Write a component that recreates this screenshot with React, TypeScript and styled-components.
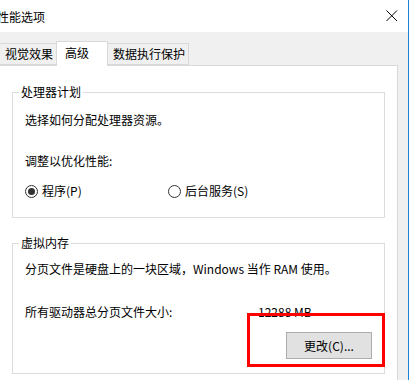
import React from "react";
import styled, { createGlobalStyle } from "styled-components";

const Global = createGlobalStyle`
  html, body { margin: 0; padding: 0; background: #fff; }
  body { font-family: "Noto Sans CJK SC", "Noto Sans", sans-serif; font-size: 12px; color: #000; }
  * { box-sizing: border-box; }
`;

const Page = styled.div`
  width: 413px;
  height: 380px;
  overflow: hidden;
  display: flex;
  background: #fff;
`;

const Window = styled.div`
  width: 409px;
  height: 380px;
  border-right: 1px solid #1883d7;
  display: flex;
  flex-direction: column;
`;

const TitleBar = styled.div`
  height: 32px;
  flex: none;
  background: #fff;
  display: flex;
  align-items: center;
  justify-content: space-between;
  padding: 0 10px 0 0;
`;

const Title = styled.span`
  margin-left: -3px;
  font-size: 12px;
  line-height: 16px;
  margin-top: 2px;
`;

const Body = styled.div`
  flex: 1;
  background: #f0f0f0;
  padding: 9px 10px 0 0;
  display: flex;
  flex-direction: column;
`;

const TabStrip = styled.div`
  display: flex;
  align-items: flex-end;
  margin-left: -2px;
  height: 24px;
  position: relative;
  z-index: 1;
`;

const Tab = styled.div<{ $active?: boolean; $w: number }>`
  width: ${(p) => p.$w}px;
  height: ${(p) => (p.$active ? 25 : 22)}px;
  margin-bottom: ${(p) => (p.$active ? -1 : 0)}px;
  background: ${(p) => (p.$active ? "#fff" : "#f0f0f0")};
  border: 1px solid #d9d9d9;
  border-bottom: ${(p) => (p.$active ? "none" : "1px solid #d9d9d9")};
  display: flex;
  align-items: center;
  padding: ${(p) => (p.$active ? "0 0 3px 8px" : "0 0 0 5px")};
  font-size: 12px;
  line-height: 16px;
  white-space: nowrap;
  &:first-child { border-right: none; padding-left: 6px; }
  &:last-child { border-left: none; }
`;

const Panel = styled.div`
  flex: 1;
  margin-left: -2px;
  background: #fff;
  border: 1px solid #d9d9d9;
  border-bottom: none;
  padding: 26px 12px 0 13px;
`;

const GroupBox = styled.div<{ $gap: number }>`
  position: relative;
  margin-top: ${(p) => p.$gap}px;
  border: 1px solid #dcdcdc;
  padding: 0 12px ${(p) => (p.$gap > 25 ? 18 : 14)}px 12px;
  display: flex;
  flex-direction: column;
`;

const Legend = styled.div`
  align-self: flex-start;
  margin: -9px 0 0 -6px;
  padding: 0 2px;
  background: #fff;
  line-height: 16px;
  height: 16px;
`;

const Line = styled.div<{ $mt: number }>`
  margin-top: ${(p) => p.$mt}px;
  line-height: 16px;
  height: 16px;
  white-space: nowrap;
  display: flex;
`;

const Label = styled.span<{ $w?: number }>`
  width: ${(p) => (p.$w ? `${p.$w}px` : "auto")};
  flex: none;
`;

const RadioRow = styled.div`
  margin-top: 14px;
  display: flex;
  height: 16px;
  align-items: center;
`;

const RadioItem = styled.label`
  width: 143px;
  display: flex;
  align-items: center;
  gap: 4px;
  line-height: 16px;
`;

const RadioCircle = styled.span<{ $on?: boolean }>`
  width: 13px;
  height: 13px;
  border: 1px solid #333;
  border-radius: 50%;
  display: flex;
  align-items: center;
  justify-content: center;
  &::after {
    content: "";
    width: 7px;
    height: 7px;
    border-radius: 50%;
    background: ${(p) => (p.$on ? "#333" : "transparent")};
  }
`;

const ButtonRow = styled.div`
  margin-top: 12px;
  display: flex;
  justify-content: flex-end;
`;

const Button = styled.button`
  width: 86px;
  height: 27px;
  background: #e1e1e1;
  border: 1px solid #adadad;
  font-family: inherit;
  font-size: 12px;
  color: #000;
  padding: 0;
`;

const Highlight = styled.div`
  position: absolute;
  left: 234px;
  top: 69px;
  width: 138px;
  height: 54px;
  border: 3px solid #f00;
  pointer-events: none;
`;

const CloseIcon = () => (
  <svg width="12" height="12" viewBox="0 0 12 12">
    <path d="M0.5 0.5 L11 11 M11 0.5 L0.5 11" stroke="#000" strokeWidth="1" />
  </svg>
);

export default function App() {
  return (
    <Page>
      <Global />
      <Window>
        <TitleBar>
          <Title>性能选项</Title>
          <CloseIcon />
        </TitleBar>
        <Body>
          <TabStrip>
            <Tab $w={58}>视觉效果</Tab>
            <Tab $active $w={52}>高级</Tab>
            <Tab $w={81}>数据执行保护</Tab>
          </TabStrip>
          <Panel>
            <GroupBox $gap={0}>
              <Legend>处理器计划</Legend>
              <Line $mt={12}>选择如何分配处理器资源。</Line>
              <Line $mt={25}>调整以优化性能:</Line>
              <RadioRow>
                <RadioItem>
                  <RadioCircle $on />
                  程序(P)
                </RadioItem>
                <RadioItem>
                  <RadioCircle />
                  后台服务(S)
                </RadioItem>
              </RadioRow>
              <div style={{ height: 4 }} />
            </GroupBox>
            <GroupBox $gap={25}>
              <Legend>虚拟内存</Legend>
              <Line $mt={10}>分页文件是硬盘上的一块区域，Windows 当作 RAM 使用。</Line>
              <Line $mt={27}>
                <Label $w={233}>所有驱动器总分页文件大小:</Label>
                <Label>12288 MB</Label>
              </Line>
              <ButtonRow>
                <Button>更改(C)...</Button>
              </ButtonRow>
              <Highlight />
            </GroupBox>
          </Panel>
        </Body>
      </Window>
    </Page>
  );
}
